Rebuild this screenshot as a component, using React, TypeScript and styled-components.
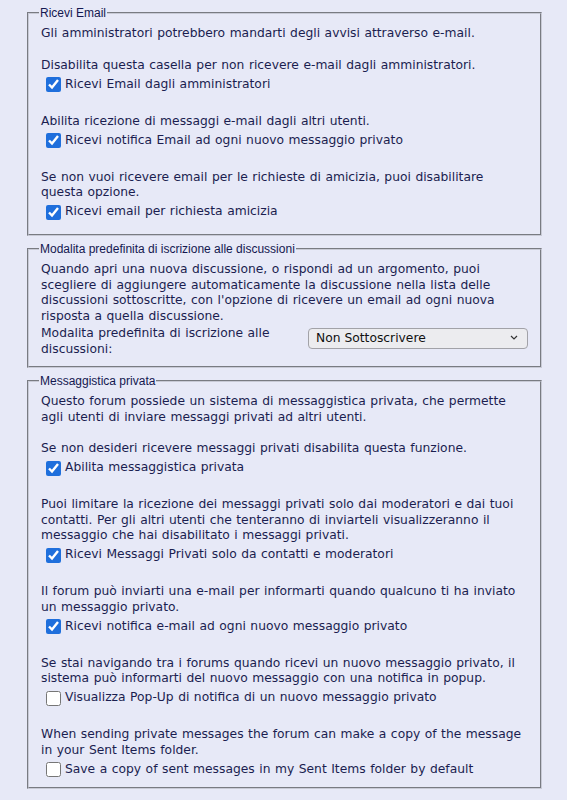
import React from "react";
import styled, { createGlobalStyle } from "styled-components";

const GlobalStyle = createGlobalStyle`
  html, body {
    margin: 0;
    padding: 0;
    background: #e7e9f7;
  }
  body {
    font-family: "DejaVu Sans", Verdana, sans-serif;
    color: #1b1e50;
  }
`;

const Page = styled.div`
  width: 515px;
  padding: 6px 0 12px 27px;
  display: flex;
  flex-direction: column;
  gap: 6px;
`;

const Panel = styled.fieldset<{ $bottom?: number }>`
  margin: 0;
  min-width: 0;
  padding: 6px 12px ${(p) => p.$bottom ?? 9}px 12px;
  border: 2px groove #c8cad6;
  display: flex;
  flex-direction: column;
  gap: 19px;
`;

const Legend = styled.legend`
  margin-left: -2px;
  padding: 0 1px;
  font-family: "Liberation Sans", Arial, sans-serif;
  font-size: 12px;
  line-height: 14px;
  color: #141850;
`;

const Group = styled.div`
  display: flex;
  flex-direction: column;
`;

const Note = styled.p<{ $intro?: boolean }>`
  margin: 0 0 ${(p) => (p.$intro ? "-3px" : "0")} 0;
  font-size: 12.3px;
  line-height: 15.5px;
  word-spacing: 0.6px;
`;

const CheckRow = styled.label`
  display: flex;
  align-items: center;
  height: 20px;
  margin-top: 1.5px;
  font-size: 12.3px;
  line-height: 15.5px;
  word-spacing: 0.6px;
`;

const Box = styled.input`
  width: 15px;
  height: 15px;
  margin: 0 4px 0 5px;
  accent-color: #1f6fdc;
  flex: none;
`;

const FieldRow = styled.div`
  display: grid;
  grid-template-columns: 1fr 220px;
  column-gap: 20px;
  align-items: start;
  margin-top: -17px;
`;

const FieldLabel = styled.label`
  font-size: 12.3px;
  line-height: 15.5px;
  word-spacing: 0.6px;
`;

const SelectWrap = styled.div`
  position: relative;
  margin-top: 1px;
`;

const Select = styled.select`
  appearance: none;
  width: 100%;
  height: 21px;
  margin: 0;
  padding: 0 20px 0 7px;
  border: 1px solid #a2a2a8;
  border-radius: 4px;
  background: #ececef;
  font-family: "DejaVu Sans", Verdana, sans-serif;
  font-size: 12.3px;
  color: #111;
`;

const Chevron = styled.svg`
  position: absolute;
  right: 10px;
  top: 8px;
  pointer-events: none;
`;

type Opt = { text: string; label: string; checked: boolean };

function Option({ text, label, checked }: Opt) {
  return (
    <Group>
      <Note>{text}</Note>
      <CheckRow>
        <Box type="checkbox" defaultChecked={checked} />
        {label}
      </CheckRow>
    </Group>
  );
}

export default function App() {
  return (
    <>
      <GlobalStyle />
      <Page>
        <Panel $bottom={12}>
          <Legend>Ricevi Email</Legend>
          <Note $intro>Gli amministratori potrebbero mandarti degli avvisi attraverso e-mail.</Note>
          <Option
            text="Disabilita questa casella per non ricevere e-mail dagli amministratori."
            label="Ricevi Email dagli amministratori"
            checked
          />
          <Option
            text="Abilita ricezione di messaggi e-mail dagli altri utenti."
            label="Ricevi notifica Email ad ogni nuovo messaggio privato"
            checked
          />
          <Option
            text="Se non vuoi ricevere email per le richieste di amicizia, puoi disabilitare questa opzione."
            label="Ricevi email per richiesta amicizia"
            checked
          />
        </Panel>

        <Panel>
          <Legend>Modalita predefinita di iscrizione alle discussioni</Legend>
          <Note>
            Quando apri una nuova discussione, o rispondi ad un argomento, puoi scegliere di
            aggiungere automaticamente la discussione nella lista delle discussioni sottoscritte,
            con l'opzione di ricevere un email ad ogni nuova risposta a quella discussione.
          </Note>
          <FieldRow>
            <FieldLabel htmlFor="sub-mode">Modalita predefinita di iscrizione alle discussioni:</FieldLabel>
            <SelectWrap>
              <Select id="sub-mode" defaultValue="none">
                <option value="none">Non Sottoscrivere</option>
                <option value="nomail">Sottoscrivi senza notifica</option>
                <option value="mail">Sottoscrivi con notifica email</option>
              </Select>
              <Chevron width="8" height="5" viewBox="0 0 8 5">
                <path d="M1 1 L4 4 L7 1" fill="none" stroke="#333" strokeWidth="1.2" />
              </Chevron>
            </SelectWrap>
          </FieldRow>
        </Panel>

        <Panel $bottom={7}>
          <Legend>Messaggistica privata</Legend>
          <Note $intro>
            Questo forum possiede un sistema di messaggistica privata, che permette agli utenti di
            inviare messaggi privati ad altri utenti.
          </Note>
          <Option
            text="Se non desideri ricevere messaggi privati disabilita questa funzione."
            label="Abilita messaggistica privata"
            checked
          />
          <Option
            text="Puoi limitare la ricezione dei messaggi privati solo dai moderatori e dai tuoi contatti. Per gli altri utenti che tenteranno di inviarteli visualizzeranno il messaggio che hai disabilitato i messaggi privati."
            label="Ricevi Messaggi Privati solo da contatti e moderatori"
            checked
          />
          <Option
            text="Il forum può inviarti una e-mail per informarti quando qualcuno ti ha inviato un messaggio privato."
            label="Ricevi notifica e-mail ad ogni nuovo messaggio privato"
            checked
          />
          <Option
            text="Se stai navigando tra i forums quando ricevi un nuovo messaggio privato, il sistema può informarti del nuovo messaggio con una notifica in popup."
            label="Visualizza Pop-Up di notifica di un nuovo messaggio privato"
            checked={false}
          />
          <Option
            text="When sending private messages the forum can make a copy of the message in your Sent Items folder."
            label="Save a copy of sent messages in my Sent Items folder by default"
            checked={false}
          />
        </Panel>
      </Page>
    </>
  );
}
